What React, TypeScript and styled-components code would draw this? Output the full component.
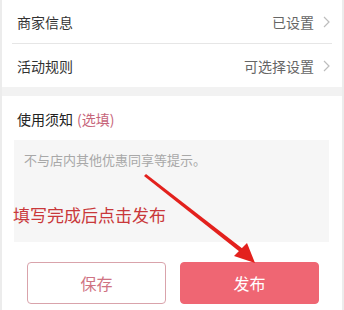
import React from 'react'
import styled, { createGlobalStyle } from 'styled-components'

const GlobalStyle = createGlobalStyle`
body {
    margin: 0;
    background: #ffffff;
    font-family: "Noto Sans CJK SC", "Noto Sans", sans-serif;
}
`

const Page = styled.div`
position: relative;
width: 344px;
height: 310px;
box-sizing: border-box;
border-left: 2px solid #ececec;
border-right: 2px solid #ececec;
background: #ffffff;
overflow: hidden;
`

const Row = styled.div<{ $divider?: boolean }>`
display: flex;
align-items: center;
justify-content: space-between;
height: 43px;
margin: 0 10px;
padding: 0 2px 0 5px;
border-bottom: ${p => (p.$divider ? '1px solid #e6e6e6' : 'none')};
font-size: 14px;
color: #333333;
`

const Value = styled.span`
display: flex;
align-items: center;
gap: 9px;
color: #666666;
`

const Band = styled.div`
height: 9px;
background: #f2f2f2;
`

const Section = styled.div`
padding: 13px 0 0;
`

const Title = styled.div`
padding-left: 15px;
font-size: 14px;
line-height: 20px;
color: #222222;
`

const Optional = styled.span`
color: #c7657a;
margin-left: 4px;
`

const Notes = styled.div`
margin: 11px 13px 0 12px;
height: 102px;
box-sizing: border-box;
padding: 10px;
background: #f6f6f6;
font-size: 13px;
line-height: 20px;
color: #a8a8a8;
`

const Buttons = styled.div`
display: flex;
gap: 14px;
padding: 20px 23px 0 25px;
`

const Button = styled.div<{ $primary?: boolean }>`
flex: 1;
height: 42px;
box-sizing: border-box;
display: flex;
align-items: center;
justify-content: center;
border-radius: 4px;
font-size: 16px;
border: 1px solid ${p => (p.$primary ? '#ef6673' : '#d9a3ab')};
background: ${p => (p.$primary ? '#ef6673' : '#ffffff')};
color: ${p => (p.$primary ? '#ffffff' : '#cf7383')};
`

const Hint = styled.div`
position: absolute;
left: 11px;
top: 203px;
font-size: 17px;
line-height: 24px;
color: #c9383a;
`

const Overlay = styled.svg`
position: absolute;
left: 0;
top: 0;
pointer-events: none;
`

const Chevron = () => (
    <svg width="7" height="12" viewBox="0 0 7 12">
        <path d="M1 1 L6 6 L1 11" fill="none" stroke="#bdbdbd" strokeWidth="1.2" />
    </svg>
)

const App: React.FC = () => {
    return (
        <Page>
            <GlobalStyle />
            <Row $divider>
                <span>商家信息</span>
                <Value>已设置<Chevron /></Value>
            </Row>
            <Row>
                <span>活动规则</span>
                <Value>可选择设置<Chevron /></Value>
            </Row>
            <Band />
            <Section>
                <Title>使用须知<Optional>(选填)</Optional></Title>
                <Notes>不与店内其他优惠同享等提示。</Notes>
                <Buttons>
                    <Button>保存</Button>
                    <Button $primary>发布</Button>
                </Buttons>
            </Section>
            <Hint>填写完成后点击发布</Hint>
            <Overlay width="344" height="310" viewBox="0 0 344 310">
                <polygon points="142,176 144,174 241,249 238,252" fill="#e3211d" />
                <polygon points="253,263 232,256 245,243" fill="#e3211d" />
            </Overlay>
        </Page>
    )
}

export default App
